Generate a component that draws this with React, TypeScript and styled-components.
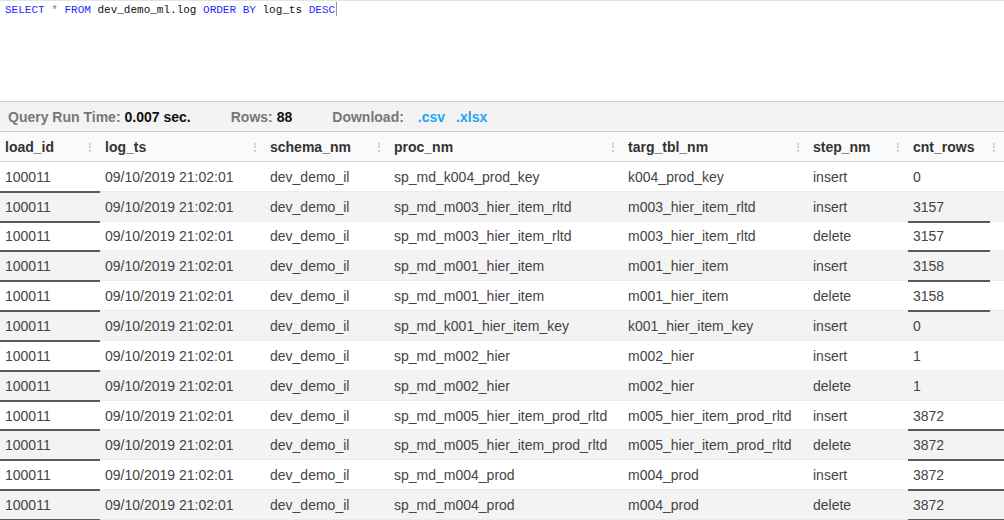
import React from 'react'
import styled, { createGlobalStyle } from 'styled-components'

const GlobalStyle = createGlobalStyle`
  html, body {
    margin: 0;
    padding: 0;
    background: #ffffff;
    font-family: "Liberation Sans", Arial, sans-serif;
  }
`

const Page = styled.div`
  width: 1004px;
  height: 520px;
  overflow: hidden;
  display: flex;
  flex-direction: column;
`

const Editor = styled.div`
  box-sizing: border-box;
  height: 101px;
  flex: none;
  border-top: 1px solid #e4e4e4;
  padding: 1px 0 0 5px;
  font-family: "Liberation Mono", "Courier New", monospace;
  font-size: 11px;
  line-height: 15px;
  color: #111;
  white-space: pre;
`

const Kw = styled.span`
  color: #2a1fff;
`

const Op = styled.span`
  color: #777;
`

const Cursor = styled.span`
  display: inline-block;
  width: 1px;
  height: 14px;
  margin-left: 1px;
  vertical-align: -3px;
  background: #999;
`

const Toolbar = styled.div`
  box-sizing: border-box;
  height: 31px;
  flex: none;
  display: flex;
  align-items: center;
  gap: 40px;
  padding: 1px 8px 0;
  background: #f3f3f3;
  border-top: 1px solid #cfcfcf;
  border-bottom: 1px solid #cfcfcf;
  font-size: 14px;
  font-weight: bold;
`

const Stat = styled.div`
  display: flex;
  gap: 4px;
  color: #777;
`

const Value = styled.span`
  color: #111;
`

const Links = styled.div`
  display: flex;
  gap: 11px;
  color: #777;
  & > span:first-child {
    margin-right: 3px;
  }
`

const DlLink = styled.a`
  color: #1ea4f7;
  text-decoration: none;
  font-weight: bold;
`

const Grid = styled.div`
  display: grid;
  grid-template-columns: 100px 165px 124px 234px 185px 100px 1fr;
`

const HeadRow = styled(Grid)`
  box-sizing: border-box;
  height: 30px;
  background: #fafafa;
  border-bottom: 1px solid #d6d6d6;
`

const HeadCell = styled.div`
  position: relative;
  display: flex;
  align-items: center;
  padding: 1px 0 0 5px;
  font-size: 14px;
  font-weight: bold;
  color: #333;
  &::after {
    content: '';
    position: absolute;
    right: 9px;
    top: 11px;
    height: 9px;
    border-left: 2px dotted #cfcfcf;
  }
`

const Row = styled(Grid)<{ $alt: boolean }>`
  box-sizing: border-box;
  height: 30px;
  background: ${p => (p.$alt ? '#f3f3f3' : '#ffffff')};
  border-bottom: 1px solid #ebebeb;
`

const Cell = styled.div<{ $mark?: 'full' | 'short' }>`
  position: relative;
  display: flex;
  align-items: center;
  padding: 1px 0 0 5px;
  font-size: 14px;
  color: #444;
  white-space: nowrap;
  &::after {
    content: '';
    display: ${p => (p.$mark ? 'block' : 'none')};
    position: absolute;
    left: 0;
    bottom: -2px;
    width: ${p => (p.$mark === 'short' ? '82px' : '100%')};
    height: 2px;
    background: #5a5a5a;
  }
`

const columns = ['load_id', 'log_ts', 'schema_nm', 'proc_nm', 'targ_tbl_nm', 'step_nm', 'cnt_rows']

type LogRow = { proc: string; targ: string; step: string; cnt: string; mark?: 'full' | 'short' }

const rows: LogRow[] = [
  { proc: 'sp_md_k004_prod_key', targ: 'k004_prod_key', step: 'insert', cnt: '0' },
  { proc: 'sp_md_m003_hier_item_rltd', targ: 'm003_hier_item_rltd', step: 'insert', cnt: '3157', mark: 'short' },
  { proc: 'sp_md_m003_hier_item_rltd', targ: 'm003_hier_item_rltd', step: 'delete', cnt: '3157', mark: 'short' },
  { proc: 'sp_md_m001_hier_item', targ: 'm001_hier_item', step: 'insert', cnt: '3158', mark: 'short' },
  { proc: 'sp_md_m001_hier_item', targ: 'm001_hier_item', step: 'delete', cnt: '3158', mark: 'short' },
  { proc: 'sp_md_k001_hier_item_key', targ: 'k001_hier_item_key', step: 'insert', cnt: '0' },
  { proc: 'sp_md_m002_hier', targ: 'm002_hier', step: 'insert', cnt: '1' },
  { proc: 'sp_md_m002_hier', targ: 'm002_hier', step: 'delete', cnt: '1' },
  { proc: 'sp_md_m005_hier_item_prod_rltd', targ: 'm005_hier_item_prod_rltd', step: 'insert', cnt: '3872', mark: 'full' },
  { proc: 'sp_md_m005_hier_item_prod_rltd', targ: 'm005_hier_item_prod_rltd', step: 'delete', cnt: '3872', mark: 'full' },
  { proc: 'sp_md_m004_prod', targ: 'm004_prod', step: 'insert', cnt: '3872', mark: 'full' },
  { proc: 'sp_md_m004_prod', targ: 'm004_prod', step: 'delete', cnt: '3872', mark: 'full' },
]

export default function App() {
  return (
    <Page>
      <GlobalStyle />
      <Editor>
        <Kw>SELECT</Kw> <Op>*</Op> <Kw>FROM</Kw> dev_demo_ml.log <Kw>ORDER BY</Kw> log_ts <Kw>DESC</Kw>
        <Cursor />
      </Editor>
      <Toolbar>
        <Stat>
          Query Run Time: <Value>0.007 sec.</Value>
        </Stat>
        <Stat>
          Rows: <Value>88</Value>
        </Stat>
        <Links>
          <span>Download:</span>
          <DlLink href="#">.csv</DlLink>
          <DlLink href="#">.xlsx</DlLink>
        </Links>
      </Toolbar>
      <HeadRow>
        {columns.map(c => (
          <HeadCell key={c}>{c}</HeadCell>
        ))}
      </HeadRow>
      {rows.map((r, i) => (
        <Row key={i} $alt={i % 2 === 1}>
          <Cell $mark="full">100011</Cell>
          <Cell>09/10/2019 21:02:01</Cell>
          <Cell>dev_demo_il</Cell>
          <Cell>{r.proc}</Cell>
          <Cell>{r.targ}</Cell>
          <Cell>{r.step}</Cell>
          <Cell $mark={r.mark}>{r.cnt}</Cell>
        </Row>
      ))}
    </Page>
  )
}
